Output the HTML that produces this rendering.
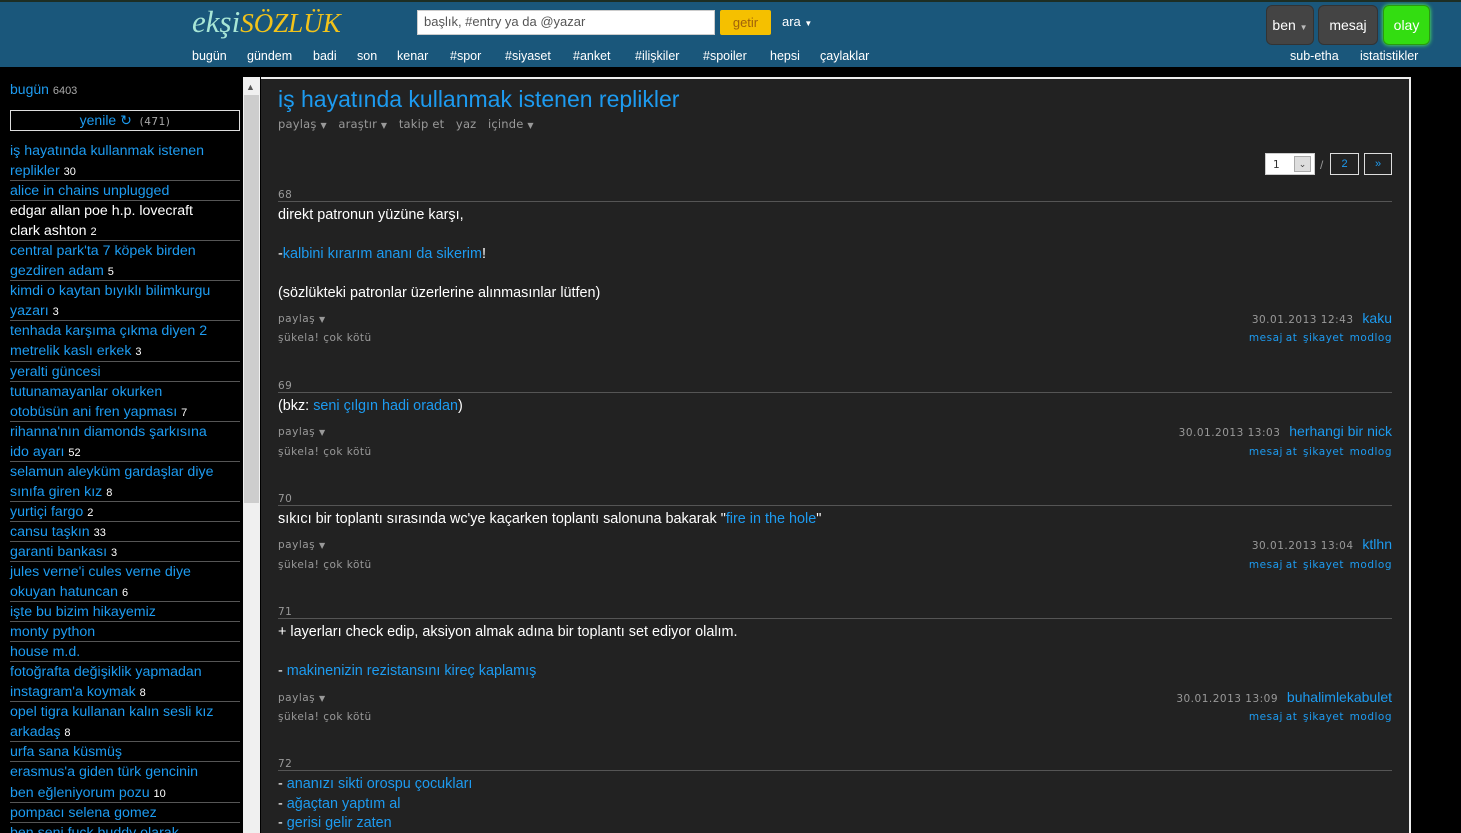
<!DOCTYPE html>
<html><head><meta charset="utf-8"><style>
*{margin:0;padding:0;box-sizing:border-box}
html,body{width:1461px;height:833px;overflow:hidden}
body{background:#000;font-family:"Liberation Sans",sans-serif;position:relative;color:#fff}
.a{position:absolute;white-space:nowrap;line-height:16px}
.b{color:#1d9bf0}
.g{color:#999}
.s{font-family:"DejaVu Sans",sans-serif;font-size:10.5px;letter-spacing:0.5px}
.m{font-size:14.4px}
#hdr{position:absolute;left:0;top:0;width:1461px;height:67px;background:#1a577b;border-top:2px solid #1d2e24}
.nav{font-size:12.5px;color:#fff;top:46px}
.btn{position:absolute;top:3px;height:40px;background:#444;border:1px solid #333;border-radius:6px;color:#fff;font-size:14px;line-height:38px;text-align:center}
#side{position:absolute;left:10px;top:141px;width:230px;font-size:14.2px;line-height:20.05px}
#side div{box-shadow:inset 0 -1px #555;color:#1d9bf0;padding-right:24px}
#side div.w{color:#fff}
#side small{font-size:11px;color:#fff;line-height:0}
#main{position:absolute;left:261px;top:77px;width:1150px;height:756px;background:#222;border-top:2px solid #eee;border-right:2px solid #eee}
.hr{position:absolute;left:278px;width:1114px;height:1px;background:#555}
.tri{font-size:8px;color:#999}
.ft{word-spacing:-1px}
</style></head><body>
<div id="hdr">
<div class="a" style="left:192px;top:3px;font-family:'Liberation Serif',serif;font-size:31px;line-height:34px;font-style:italic"><span style="color:#a8e6d6">ekşi</span><span style="color:#f2c31a;font-size:27px">SÖZLÜK</span></div>
<div style="position:absolute;left:417px;top:8px;width:298px;height:25px;background:#fff;border:1px solid #ccc"></div>
<div class="a" style="left:424px;top:12px;font-size:13px;color:#555">başlık, #entry ya da @yazar</div>
<div style="position:absolute;left:720px;top:8px;width:51px;height:25px;background:#f5c000;border-radius:2px;color:#a0620a;font-size:13px;text-align:center;line-height:25px">getir</div>
<div class="a" style="left:782px;top:12px;font-size:13px">ara <span style="font-size:8px">▼</span></div>
<div class="a nav" style="left:192px">bugün</div>
<div class="a nav" style="left:247px">gündem</div>
<div class="a nav" style="left:313px">badi</div>
<div class="a nav" style="left:357px">son</div>
<div class="a nav" style="left:397px">kenar</div>
<div class="a nav" style="left:450px">#spor</div>
<div class="a nav" style="left:505px">#siyaset</div>
<div class="a nav" style="left:573px">#anket</div>
<div class="a nav" style="left:635px">#ilişkiler</div>
<div class="a nav" style="left:703px">#spoiler</div>
<div class="a nav" style="left:770px">hepsi</div>
<div class="a nav" style="left:820px">çaylaklar</div>
<div class="a nav" style="left:1290px">sub-etha</div>
<div class="a nav" style="left:1360px">istatistikler</div>
<div class="btn" style="left:1266px;width:48px">ben <span style="font-size:8px;color:#bbb">▼</span></div>
<div class="btn" style="left:1318px;width:60px">mesaj</div>
<div class="btn" style="left:1383px;width:47px;background:#33dd11;border-color:#2a9a10;box-shadow:0 0 4px #5f5">olay</div>
</div>

<div class="a b" style="left:10px;top:81px;font-size:14px">bugün <span style="font-size:11px;color:#aaa">6403</span></div>
<div style="position:absolute;left:10px;top:110px;width:230px;height:21px;border:1px solid #ddd;text-align:center;font-size:14px;line-height:19px;color:#1d9bf0">yenile ↻ &nbsp;<span class="s" style="color:#aaa">(471)</span></div>
<div id="side">
<div>iş hayatında kullanmak istenen replikler <small>30</small></div>
<div>alice in chains unplugged</div>
<div class="w">edgar allan poe h.p. lovecraft clark ashton <small>2</small></div>
<div>central park'ta 7 köpek birden gezdiren adam <small>5</small></div>
<div>kimdi o kaytan bıyıklı bilimkurgu yazarı <small>3</small></div>
<div>tenhada karşıma çıkma diyen 2 metrelik kaslı erkek <small>3</small></div>
<div>yeralti güncesi</div>
<div>tutunamayanlar okurken otobüsün ani fren yapması <small>7</small></div>
<div>rihanna'nın diamonds şarkısına ido ayarı <small>52</small></div>
<div>selamun aleyküm gardaşlar diye sınıfa giren kız <small>8</small></div>
<div>yurtiçi fargo <small>2</small></div>
<div>cansu taşkın <small>33</small></div>
<div>garanti bankası <small>3</small></div>
<div>jules verne'i cules verne diye okuyan hatuncan <small>6</small></div>
<div>işte bu bizim hikayemiz</div>
<div>monty python</div>
<div>house m.d.</div>
<div>fotoğrafta değişiklik yapmadan instagram'a koymak <small>8</small></div>
<div>opel tigra kullanan kalın sesli kız arkadaş <small>8</small></div>
<div>urfa sana küsmüş</div>
<div>erasmus'a giden türk gencinin ben eğleniyorum pozu <small>10</small></div>
<div>pompacı selena gomez</div>
<div>ben seni fuck buddy olarak</div>
</div>

<div style="position:absolute;left:243px;top:77px;width:17px;height:756px;background:#f0f0f0"></div>
<div style="position:absolute;left:244px;top:95px;width:15px;height:408px;background:#cdcdcd"></div>
<div class="a" style="left:246px;top:79px;font-size:9px;color:#555">▲</div>

<div id="main"></div>
<div class="a b" style="left:278px;top:85px;font-size:23px;line-height:28px">iş hayatında kullanmak istenen replikler</div>
<div class="a g s" style="left:278px;top:116px;font-size:11.5px;letter-spacing:0.2px">paylaş <span class="tri">▼</span>&nbsp;&nbsp; araştır <span class="tri">▼</span>&nbsp;&nbsp; takip et &nbsp;&nbsp;yaz &nbsp;&nbsp;içinde <span class="tri">▼</span></div>

<div style="position:absolute;left:1265px;top:153px;width:50px;height:22px;background:#fff;border:1px solid #ccc"></div>
<div class="a s" style="left:1273px;top:157px;color:#333">1</div>
<div style="position:absolute;left:1294px;top:156px;width:17px;height:16px;background:#ddd;border:1px solid #aaa;font-size:9px;color:#444;text-align:center;line-height:15px">⌄</div>
<div class="a g" style="left:1320px;top:157px;font-size:12px">/</div>
<div style="position:absolute;left:1330px;top:153px;width:29px;height:22px;border:1px solid #ddd;color:#1d9bf0;font-size:11px;text-align:center;line-height:20px">2</div>
<div style="position:absolute;left:1364px;top:153px;width:28px;height:22px;border:1px solid #ddd;color:#1d9bf0;font-size:11px;text-align:center;line-height:20px">»</div>

<!-- 68 -->
<div class="a g s" style="left:278px;top:187px">68</div><div class="hr" style="top:201px"></div>
<div class="a m" style="left:278px;top:207px">direkt patronun yüzüne karşı,</div>
<div class="a m" style="left:278px;top:246px">-<span class="b">kalbini kırarım ananı da sikerim</span>!</div>
<div class="a m" style="left:278px;top:285px">(sözlükteki patronlar üzerlerine alınmasınlar lütfen)</div>
<div class="a g s" style="left:278px;top:311px">paylaş <span class="tri">▼</span></div>
<div class="a g s" style="left:278px;top:330px">şükela! çok kötü</div>
<div class="a" style="right:69px;top:310px"><span class="s g">30.01.2013 12:43</span> &nbsp;<span class="b" style="font-size:14px">kaku</span></div>
<div class="a b s ft" style="right:69px;top:330px">mesaj at &nbsp;şikayet &nbsp;modlog</div>

<!-- 69 -->
<div class="a g s" style="left:278px;top:378px">69</div><div class="hr" style="top:392px"></div>
<div class="a m" style="left:278px;top:398px">(bkz: <span class="b">seni çılgın hadi oradan</span>)</div>
<div class="a g s" style="left:278px;top:424px">paylaş <span class="tri">▼</span></div>
<div class="a g s" style="left:278px;top:444px">şükela! çok kötü</div>
<div class="a" style="right:69px;top:423px"><span class="s g">30.01.2013 13:03</span> &nbsp;<span class="b" style="font-size:14px">herhangi bir nick</span></div>
<div class="a b s ft" style="right:69px;top:444px">mesaj at &nbsp;şikayet &nbsp;modlog</div>

<!-- 70 -->
<div class="a g s" style="left:278px;top:491px">70</div><div class="hr" style="top:505px"></div>
<div class="a m" style="left:278px;top:511px">sıkıcı bir toplantı sırasında wc'ye kaçarken toplantı salonuna bakarak "<span class="b">fire in the hole</span>"</div>
<div class="a g s" style="left:278px;top:537px">paylaş <span class="tri">▼</span></div>
<div class="a g s" style="left:278px;top:557px">şükela! çok kötü</div>
<div class="a" style="right:69px;top:536px"><span class="s g">30.01.2013 13:04</span> &nbsp;<span class="b" style="font-size:14px">ktlhn</span></div>
<div class="a b s ft" style="right:69px;top:557px">mesaj at &nbsp;şikayet &nbsp;modlog</div>

<!-- 71 -->
<div class="a g s" style="left:278px;top:604px">71</div><div class="hr" style="top:618px"></div>
<div class="a m" style="left:278px;top:624px">+ layerları check edip, aksiyon almak adına bir toplantı set ediyor olalım.</div>
<div class="a m" style="left:278px;top:663px">- <span class="b">makinenizin rezistansını kireç kaplamış</span></div>
<div class="a g s" style="left:278px;top:690px">paylaş <span class="tri">▼</span></div>
<div class="a g s" style="left:278px;top:709px">şükela! çok kötü</div>
<div class="a" style="right:69px;top:689px"><span class="s g">30.01.2013 13:09</span> &nbsp;<span class="b" style="font-size:14px">buhalimlekabulet</span></div>
<div class="a b s ft" style="right:69px;top:709px">mesaj at &nbsp;şikayet &nbsp;modlog</div>

<!-- 72 -->
<div class="a g s" style="left:278px;top:756px">72</div><div class="hr" style="top:770px"></div>
<div class="a m" style="left:278px;top:776px">- <span class="b">ananızı sikti orospu çocukları</span></div>
<div class="a m" style="left:278px;top:796px">- <span class="b">ağaçtan yaptım al</span></div>
<div class="a m" style="left:278px;top:815px">- <span class="b">gerisi gelir zaten</span></div>
</body></html>
